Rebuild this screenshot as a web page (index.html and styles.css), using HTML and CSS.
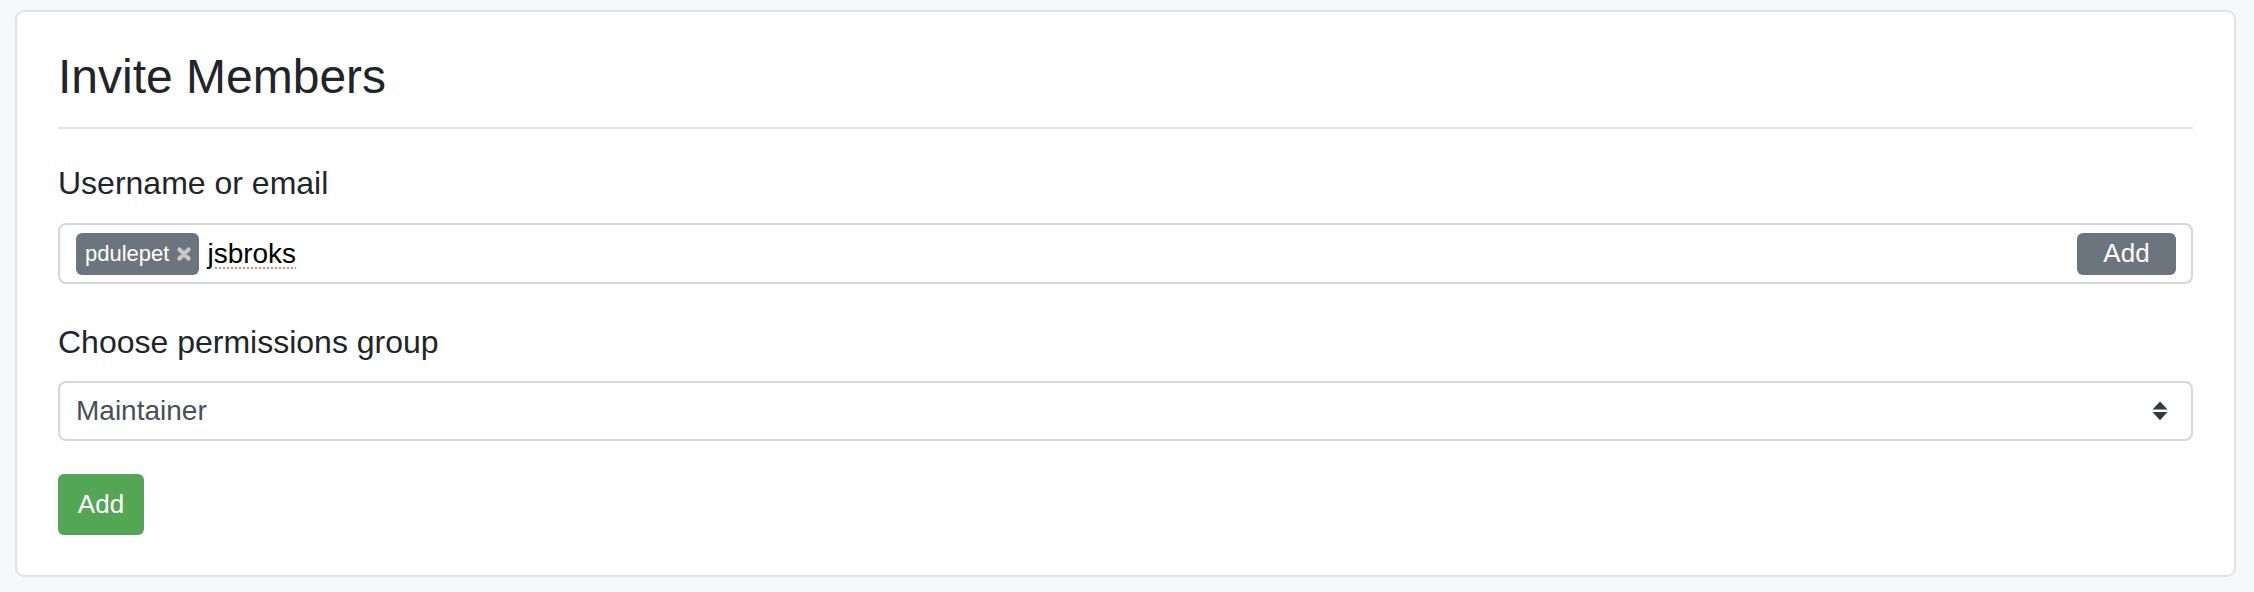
FILE: index.html
```html
<!DOCTYPE html>
<html lang="en">
<head>
<meta charset="utf-8">
<title>Invite Members</title>
<link rel="stylesheet" href="styles.css">
</head>
<body>
  <div class="card">
    <h3 class="title">Invite Members</h3>
    <hr class="divider">
    <label class="field-label">Username or email</label>
    <div class="tag-input">
      <span class="tag">pdulepet<svg class="tag-x" width="14" height="14" viewBox="0 0 14 14"><path d="M2.5 2.5 L11.5 11.5 M11.5 2.5 L2.5 11.5" stroke="#c6c9cc" stroke-width="4.2" stroke-linecap="round"/></svg></span>
      <span class="typed">jsbroks</span>
      <button class="btn btn-secondary">Add</button>
    </div>
    <label class="field-label second">Choose permissions group</label>
    <div class="select">
      <span class="select-value">Maintainer</span>
      <svg class="select-arrows" width="16" height="20" viewBox="0 0 16 20"><path d="M0.5 8.5 L8 0.5 L15.5 8.5 Z" fill="#343a40"/><path d="M0.5 11 L15.5 11 L8 19.3 Z" fill="#343a40"/></svg>
    </div>
    <button class="btn btn-success">Add</button>
  </div>
</body>
</html>
```
FILE: styles.css
```css
html, body {
  margin: 0;
  padding: 0;
}
body {
  background: #f7f8f9;
  padding: 10px 18px 16px 15px;
  font-family: "Liberation Sans", Arial, Helvetica, sans-serif;
  color: #212529;
}
.card {
  background: #ffffff;
  border: 2px solid #e1e2e3;
  border-radius: 9px;
  padding: 36px 41px 40px 41px;
  display: flex;
  flex-direction: column;
  align-items: flex-start;
}
.title {
  margin: 0;
  font-size: 48px;
  line-height: 58px;
  font-weight: 400;
  color: #212529;
}
.divider {
  align-self: stretch;
  margin: 21px 0 0 0;
  border: 0;
  height: 2px;
  background: #e5e5e5;
}
.field-label {
  display: block;
  margin-top: 32px;
  margin-bottom: 18px;
  font-size: 32px;
  line-height: 44px;
  color: #212529;
}
.field-label.second {
  margin-top: 36px;
  margin-bottom: 17px;
}
.tag-input {
  align-self: stretch;
  box-sizing: border-box;
  height: 61px;
  border: 2px solid #d3d7db;
  border-radius: 8px;
  display: flex;
  align-items: center;
  padding: 0 15px 0 16px;
}
.tag {
  display: inline-flex;
  align-items: center;
  box-sizing: border-box;
  height: 42px;
  padding: 0 8px 0 9px;
  background: #6c757d;
  color: #ffffff;
  border-radius: 6px;
  font-size: 22px;
  gap: 8px;
}
.tag-x {
  display: block;
}
.typed {
  margin-left: 8px;
  font-size: 28px;
  color: #000000;
  text-decoration: underline dotted #ef7b6f;
  text-decoration-thickness: 2px;
  text-underline-offset: 5px;
}
.btn {
  border: 0;
  font-family: "Liberation Sans", Arial, Helvetica, sans-serif;
  color: #ffffff;
  border-radius: 6px;
  padding: 0;
  display: inline-flex;
  align-items: center;
  justify-content: center;
}
.btn-secondary {
  margin-left: auto;
  width: 99px;
  height: 42px;
  background: #6c757d;
  font-size: 26px;
}
.select {
  align-self: stretch;
  box-sizing: border-box;
  height: 60px;
  border: 2px solid #d3d7db;
  border-radius: 8px;
  display: flex;
  align-items: center;
  justify-content: space-between;
  padding: 0 23px 0 16px;
}
.select-value {
  font-size: 28px;
  color: #495057;
}
.select-arrows {
  display: block;
}
.btn-success {
  margin-top: 33px;
  width: 86px;
  height: 61px;
  background: #53a653;
  font-size: 26px;
}
```
